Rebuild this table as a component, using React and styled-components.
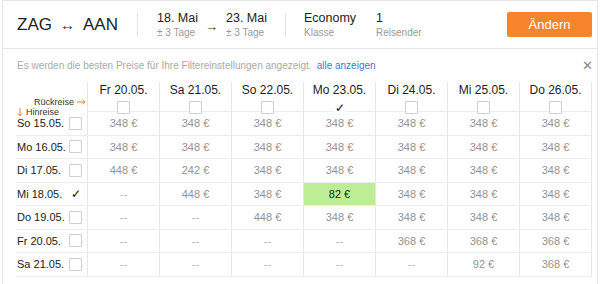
import React from 'react';
import styled, { createGlobalStyle } from 'styled-components';

const GlobalStyle = createGlobalStyle`
  body {
    margin: 0;
    background: #ffffff;
    font-family: 'Liberation Sans', Arial, sans-serif;
    color: #222;
  }
  * { box-sizing: border-box; }
`;

const Frame = styled.div`
  margin: 0 2px;
  height: 284px;
  border: 1px solid #e6e6e6;
  border-bottom: none;
`;

const Header = styled.div`
  height: 48px;
  display: flex;
  align-items: center;
  padding: 0 5px 0 14px;
  border-bottom: 1px solid #e6e6e6;
  white-space: nowrap;
`;

const Route = styled.div`
  width: 120px;
  flex-shrink: 0;
  font-size: 17px;
  color: #222;
  display: flex;
  align-items: center;
  gap: 8px;
`;

const SmallArrow = styled.span`
  font-size: 15px;
  color: #333;
`;

const Divider = styled.div`
  width: 1px;
  height: 24px;
  flex-shrink: 0;
  background: #e2e2e2;
`;

const Dates = styled.div`
  display: flex;
  align-items: center;
  padding-left: 19px;
  width: 147px;
  flex-shrink: 0;
`;

const Field = styled.div`
  display: flex;
  flex-direction: column;
  flex-shrink: 0;
  width: ${p => p.$w}px;
`;

const Main = styled.span`
  font-size: 12.5px;
  color: #222;
  line-height: 15px;
`;

const Sub = styled.span`
  font-size: 10px;
  color: #9a9a9a;
  line-height: 13px;
`;

const DateArrow = styled.span`
  font-size: 13px;
  color: #333;
  width: 21px;
  flex-shrink: 0;
  margin-left: 10px;
  margin-top: 4px;
`;

const Meta = styled.div`
  display: flex;
  padding-left: 18px;
  flex: 1;
`;

const Button = styled.button`
  width: 85px;
  height: 25px;
  flex-shrink: 0;
  border: none;
  border-radius: 2px;
  background: #f5842c;
  color: #fff;
  font-family: 'Liberation Sans', Arial, sans-serif;
  font-size: 13px;
`;

const Info = styled.div`
  height: 33px;
  display: flex;
  align-items: center;
  padding: 0 4px 0 14px;
  font-size: 10px;
  color: #aaa;
  white-space: nowrap;
`;

const Link = styled.span`
  color: #3d7cc9;
  margin-left: 5px;
  flex: 1;
`;

const Close = styled.span`
  font-size: 13px;
  color: #888;
`;

const Table = styled.div`
  margin-left: 13px;
  display: grid;
  grid-template-columns: repeat(8, 72px);
  grid-template-rows: 30px repeat(7, 23.5px);
  white-space: nowrap;
`;

const Corner = styled.div`
  border-right: 1px solid #e6e6e6;
  display: flex;
  flex-direction: column;
  font-size: 9px;
  color: #333;
  padding: 15px 1px 0 1px;
  line-height: 10px;
`;

const CornerLine = styled.div`
  display: flex;
  align-items: center;
  gap: 3px;
  justify-content: ${p => (p.$right ? 'flex-end' : 'flex-start')};
`;

const ColHead = styled.div`
  border-right: 1px solid #e6e6e6;
  border-bottom: 1px solid #ececec;
  display: flex;
  flex-direction: column;
  align-items: center;
  font-size: 12px;
  color: #222;
  padding-top: 1px;
  gap: 4px;
`;

const Box = styled.span`
  width: 13px;
  height: 13px;
  flex-shrink: 0;
  border: 1px solid ${p => (p.$checked ? 'transparent' : '#cfcfcf')};
  border-radius: 1px;
  display: inline-flex;
  align-items: center;
  justify-content: center;
  font-size: 12px;
  color: #111;
  background: #fff;
`;

const RowHead = styled.div`
  border-right: 1px solid #e6e6e6;
  border-bottom: 1px solid #ececec;
  display: flex;
  align-items: center;
  justify-content: space-between;
  padding: 0 5px 0 1px;
  font-size: 11px;
  color: #222;
`;

const Cell = styled.div`
  border-right: 1px solid #e6e6e6;
  border-bottom: 1px solid #ececec;
  display: flex;
  align-items: center;
  justify-content: center;
  font-size: 11px;
  color: ${p => (p.$best ? '#222' : p.$empty ? '#b5b5b5' : '#939393')};
  background: ${p => (p.$best ? '#bdee95' : 'transparent')};
`;

const columns = ['Fr 20.05.', 'Sa 21.05.', 'So 22.05.', 'Mo 23.05.', 'Di 24.05.', 'Mi 25.05.', 'Do 26.05.'];

const rows = [
  { day: 'So 15.05.', prices: [348, 348, 348, 348, 348, 348, 348] },
  { day: 'Mo 16.05.', prices: [348, 348, 348, 348, 348, 348, 348] },
  { day: 'Di 17.05.', prices: [448, 242, 348, 348, 348, 348, 348] },
  { day: 'Mi 18.05.', prices: [null, 448, 348, 82, 348, 348, 348], checked: true },
  { day: 'Do 19.05.', prices: [null, null, 448, 348, 348, 348, 348] },
  { day: 'Fr 20.05.', prices: [null, null, null, null, 368, 368, 368] },
  { day: 'Sa 21.05.', prices: [null, null, null, null, null, 92, 368] },
];

function Check({ checked }) {
  return <Box $checked={checked}>{checked ? '✓' : ''}</Box>;
}

const RightArrow = () => (
  <svg width="9" height="6" viewBox="0 0 9 6">
    <path d="M0 3h7.5M5.5 1l2.5 2-2.5 2" stroke="#f5842c" strokeWidth="1" fill="none" />
  </svg>
);

const DownArrow = () => (
  <svg width="6" height="9" viewBox="0 0 6 9">
    <path d="M3 0v7.5M1 5.5l2 2.5 2-2.5" stroke="#f5842c" strokeWidth="1" fill="none" />
  </svg>
);

export default function App() {
  return (
    <>
      <GlobalStyle />
      <Frame>
        <Header>
          <Route>
            ZAG <SmallArrow>↔</SmallArrow> AAN
          </Route>
          <Divider />
          <Dates>
            <Field $w={38}>
              <Main>18. Mai</Main>
              <Sub>± 3 Tage</Sub>
            </Field>
            <DateArrow>→</DateArrow>
            <Field $w={50}>
              <Main>23. Mai</Main>
              <Sub>± 3 Tage</Sub>
            </Field>
          </Dates>
          <Divider />
          <Meta>
            <Field $w={72}>
              <Main>Economy</Main>
              <Sub>Klasse</Sub>
            </Field>
            <Field $w={60}>
              <Main>1</Main>
              <Sub>Reisender</Sub>
            </Field>
          </Meta>
          <Button>Ändern</Button>
        </Header>
        <Info>
          Es werden die besten Preise für Ihre Filtereinstellungen angezeigt.
          <Link>alle anzeigen</Link>
          <Close>✕</Close>
        </Info>
        <Table>
          <Corner>
            <CornerLine $right>
              Rückreise <RightArrow />
            </CornerLine>
            <CornerLine>
              <DownArrow /> Hinreise
            </CornerLine>
          </Corner>
          {columns.map((c, i) => (
            <ColHead key={c}>
              {c}
              <Check checked={i === 3} />
            </ColHead>
          ))}
          {rows.map(r => (
            <React.Fragment key={r.day}>
              <RowHead>
                {r.day}
                <Check checked={r.checked} />
              </RowHead>
              {r.prices.map((p, i) => (
                <Cell key={i} $empty={p === null} $best={p === 82}>
                  {p === null ? '--' : `${p} €`}
                </Cell>
              ))}
            </React.Fragment>
          ))}
        </Table>
      </Frame>
    </>
  );
}
